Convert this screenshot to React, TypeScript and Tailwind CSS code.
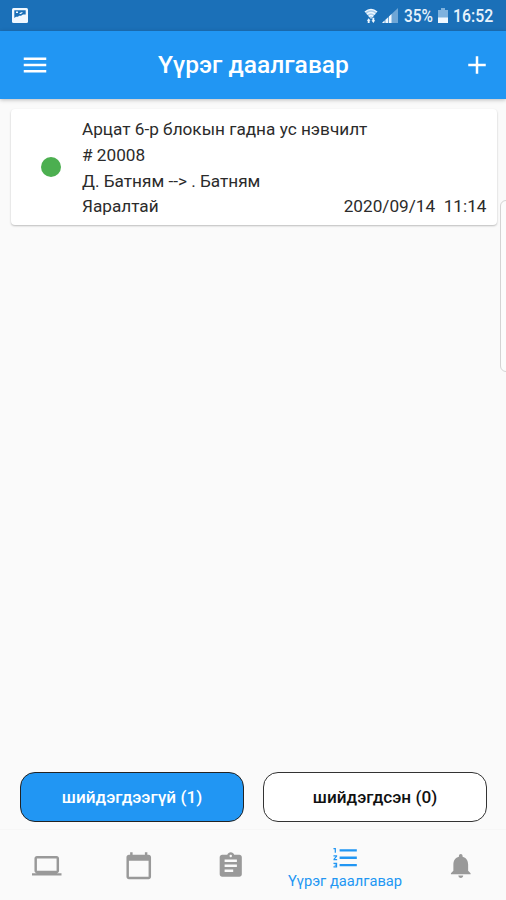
import { MdAdd, MdAssignment, MdFormatListNumbered, MdLaptop, MdMenu, MdNotifications } from 'react-icons/md';

const task = {
  title: 'Арцат 6-р блокын гадна ус нэвчилт',
  number: '# 20008',
  people: 'Д. Батням --> . Батням',
  priority: 'Яаралтай',
  date: '2020/09/14  11:14',
};

function StatusBar() {
  return (
    <div className="h-[30.5px] bg-[#1b70b8] flex items-center justify-between pl-3 pr-[13px] text-[#e8f3fc] shrink-0">
      <svg className="w-4 h-[15px] mt-px" viewBox="0 0 16 15">
        <rect width="16" height="15" rx="1.500" fill="#f0f8ff" />
        <path d="M2.300 2.300h11.400v4.200H11l-2 1.300H7l-1 1H4L2.300 10z" fill="#1b70b8" />
        <path d="M4 3.500h2v1.500H4zM7 6l2-1.800h2L9 6z" fill="#f0f8ff" />
      </svg>
      <div className="flex items-center pt-px">
        <svg className="w-[14px] h-[16px] mr-[4px]" viewBox="0 0 15 17">
          <path d="M1 4Q7.500-1.500 14 4L7.500 12z" fill="#a9cdec" />
          <path d="M1 4.300Q7.500-1.300 14 4.300M3 6.700Q7.500 2.700 12 6.700M5.200 9Q7.500 7 9.800 9" fill="none" stroke="#f0f8ff" strokeWidth="1.500" />
          <path d="M3 13.500L5 11l2 2.500H6V16H4v-2.500zM8 13h1v-2.500h2V13h1l-2 3z" fill="#f0f8ff" />
        </svg>
        <svg className="w-[16px] h-[15px] mr-[6px]" viewBox="0 0 16 15">
          <path d="M0 15L16 0v15z" fill="#6ea6d6" />
          <path d="M0 15l2.500-2.400V15zM3.500 11.700L6 9.400V15H3.500zM7 8.400l2.500-2.300V15H7z" fill="#f0f8ff" />
        </svg>
        <span className="inline-block w-[30px] text-[18px] font-medium leading-none"><span className="inline-block origin-left scale-x-[0.86]">35%</span></span>
        <svg className="w-[10px] h-[15px] ml-[4px] mr-[5px]" viewBox="0 0 10 15">
          <path d="M3 0h4v2h3v13H0V2h3z" fill="#7fb2de" />
          <path d="M0 9.500h10V15H0z" fill="#f0f8ff" />
        </svg>
        <span className="inline-block w-[40px] text-[18px] font-medium leading-none"><span className="inline-block origin-left scale-x-[0.88]">16:52</span></span>
      </div>
    </div>
  );
}

function CalendarIcon() {
  return (
    <svg className="size-[29.5px]" viewBox="0 0 24 24" fill="currentColor">
      <path d="M20 3h-1V1h-2v2H7V1H5v2H4c-1.100 0-2 .9-2 2v16c0 1.100.9 2 2 2h16c1.100 0 2-.9 2-2V5c0-1.100-.9-2-2-2zm0 18H4V8h16v13z" />
    </svg>
  );
}

export default function App() {
  return (
    <div className="relative w-[506px] h-[900px] overflow-hidden flex flex-col bg-[#fafafa] font-[Roboto,sans-serif] text-[#2b2b2b]">
      <StatusBar />
      <header className="h-[68px] shrink-0 bg-[#2196f3] text-white flex items-center justify-between pl-5 pr-[14px] shadow-[0_1px_4px_rgba(0,0,0,0.25)]">
        <MdMenu className="size-[30px]" />
        <h1 className="pt-[2px] pr-[6px] -mr-[1px] text-[24.600px] font-medium whitespace-nowrap">Үүрэг даалгавар</h1>
        <MdAdd className="size-[30px]" />
      </header>

      <main className="flex-1 flex flex-col pl-[11px] pr-[9px] pt-[10.500px]">
        <div className="h-[116px] rounded-[4px] bg-white shadow-[0_1px_2px_rgba(0,0,0,0.25)] flex items-center pl-[30px] pr-[10.500px]">
          <span className="size-5 rounded-full bg-[#4caf50] shrink-0" />
          <div className="ml-[21px] pt-[3px] flex-1 text-[17.200px] leading-[25.600px] whitespace-pre">
            <p>{task.title}</p>
            <p>{task.number}</p>
            <p>{task.people}</p>
            <div className="flex justify-between">
              <span>{task.priority}</span>
              <span>{task.date}</span>
            </div>
          </div>
        </div>
        <div className="mt-auto mb-[7px] pl-[9px] pr-[10px] flex gap-[19px] text-[17.200px] font-medium">
          <button className="flex-1 h-[50px] pt-[2px] rounded-[15px] border border-[#222] bg-[#2196f3] text-white">шийдэгдээгүй (1)</button>
          <button className="flex-1 h-[50px] pt-[2px] rounded-[15px] border border-[#333] bg-white text-[#111]">шийдэгдсэн (0)</button>
        </div>
      </main>

      <nav className="h-[71px] shrink-0 border-t border-[#f6f6f6] flex text-[#999]">
        <div className="w-[92px] flex items-center justify-center pl-[2px] pt-[2px]"><MdLaptop className="size-[29.500px]" /></div>
        <div className="w-[92px] flex items-center justify-center pl-[2px] pt-[2px]"><CalendarIcon /></div>
        <div className="w-[92px] flex items-center justify-center pl-[2px] pt-[2px]"><MdAssignment className="size-[29.500px]" /></div>
        <div className="w-[138px] flex flex-col items-center pt-[13px] text-[#2196f3]">
          <MdFormatListNumbered className="size-[29.500px] ml-px" />
          <span className="text-[14.700px] leading-[17px] whitespace-nowrap">Үүрэг даалгавар</span>
        </div>
        <div className="w-[92px] flex items-center justify-center pl-[2px] pt-[2px]"><MdNotifications className="size-[29.500px]" /></div>
      </nav>

      {/* edge panel handle */}
      <div className="absolute left-[500px] top-[200px] w-5 h-[172px] rounded-[6px] border border-[#d4d4d4] bg-[#fcfcfc]" />
    </div>
  );
}
